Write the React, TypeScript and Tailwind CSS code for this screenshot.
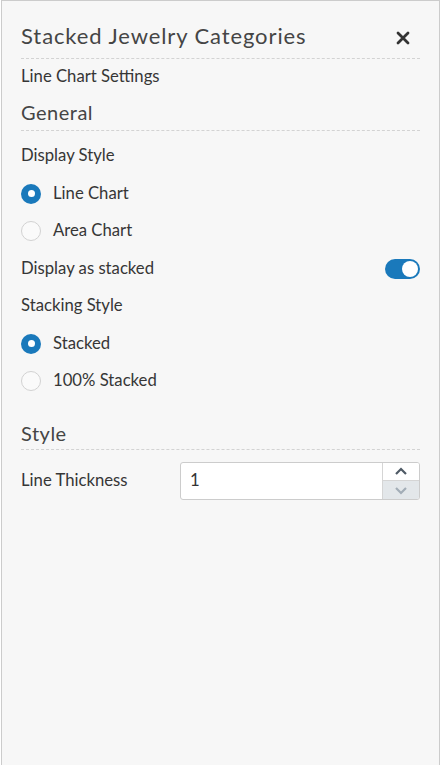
import React from "react";

const font = { fontFamily: "Lato, 'Noto Sans', sans-serif" };

function Radio({ label, checked }: { label: string; checked?: boolean }) {
  return (
    <div className="flex h-[37.5px] items-center gap-[12px]">
      {checked ? (
        <span className="flex h-5 w-5 items-center justify-center rounded-full bg-[#1a79bb]">
          <span className="h-[7px] w-[7px] rounded-full bg-white" />
        </span>
      ) : (
        <span className="h-5 w-5 rounded-full border border-[#d2d2d2] bg-[#fafafa]" />
      )}
      <span className="text-[16.7px] text-[#363636]">{label}</span>
    </div>
  );
}

export default function App() {
  return (
    <div className="h-[765px] bg-white" style={font}>
      <div className="ml-[1px] h-[766px] w-[439px] border border-[#cccccc] bg-[#f7f7f7] px-[19px]">
        {/* Header */}
        <div className="flex items-center justify-between border-b border-dashed border-[#d3d3d3] pb-[10px] pt-[23px]">
          <h1 className="text-[22px] leading-[24px] tracking-[0.9px] text-[#454545]">
            Stacked Jewelry Categories
          </h1>
          <svg width="14" height="14" viewBox="0 0 14 14" className="mr-[10px] mt-[3px]">
            <path d="M2 2 L12 12 M12 2 L2 12" stroke="#333" strokeWidth="2.8" strokeLinecap="round" />
          </svg>
        </div>

        <p className="mt-[5px] text-[16.7px] leading-[24px] text-[#363636]">Line Chart Settings</p>

        {/* General */}
        <h2 className="mt-[12px] border-b border-dashed border-[#d3d3d3] pb-[6px] text-[20px] leading-[24px] tracking-[0.5px] text-[#454545]">
          General
        </h2>
        <div className="flex flex-col pt-[6.25px]">
          <div className="flex h-[37.5px] items-center text-[16.7px] text-[#363636]">Display Style</div>
          <Radio label="Line Chart" checked />
          <Radio label="Area Chart" />
          <div className="flex h-[37.5px] items-center justify-between">
            <span className="text-[16.7px] text-[#363636]">Display as stacked</span>
            <span className="flex h-5 w-[35px] items-center justify-end rounded-full bg-[#1a79bb] px-[2px]">
              <span className="h-4 w-4 rounded-full bg-white" />
            </span>
          </div>
          <div className="flex h-[37.5px] items-center text-[16.7px] text-[#363636]">Stacking Style</div>
          <Radio label="Stacked" checked />
          <Radio label="100% Stacked" />
        </div>

        {/* Style */}
        <h2 className="mt-[21px] border-b border-dashed border-[#d3d3d3] pb-[4px] text-[20px] leading-[24px] tracking-[0.5px] text-[#454545]">
          Style
        </h2>
        <div className="mt-[12px] flex items-center">
          <span className="w-[159px] text-[16.7px] text-[#363636]">Line Thickness</span>
          <div className="flex h-[38px] flex-1 overflow-hidden rounded-[3px] border border-[#cccccc] bg-white">
            <span className="flex flex-1 items-center pl-[9px] text-[16.7px] text-[#333]">1</span>
            <div className="flex w-[37px] flex-col border-l border-[#d5d5d5]">
              <div className="flex flex-1 items-center justify-center border-b border-[#d5d5d5] bg-white">
                <svg width="14" height="9" viewBox="0 0 14 9">
                  <path d="M2 7 L7 2 L12 7" fill="none" stroke="#4f5a66" strokeWidth="2.2" />
                </svg>
              </div>
              <div className="flex flex-1 items-center justify-center bg-[#e3e7ea]">
                <svg width="14" height="9" viewBox="0 0 14 9">
                  <path d="M2 2 L7 7 L12 2" fill="none" stroke="#a3adb7" strokeWidth="2.2" />
                </svg>
              </div>
            </div>
          </div>
        </div>
      </div>
    </div>
  );
}
